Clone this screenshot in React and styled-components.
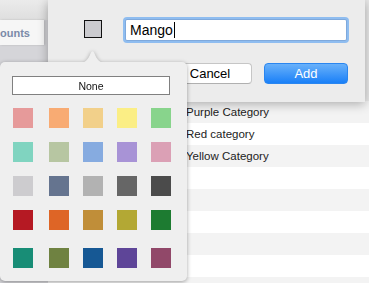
import React from 'react';
import styled, { createGlobalStyle } from 'styled-components';

const GlobalStyle = createGlobalStyle`
  html, body { margin: 0; padding: 0; }
  body {
    font-family: "Liberation Sans", Arial, sans-serif;
    background: #fff;
    -webkit-font-smoothing: antialiased;
  }
`;

const PALETTE = [
  ['#e69a9a', '#f8ab73', '#f2d08a', '#fbee85', '#88d48c'],
  ['#80d4c0', '#b7c6a2', '#86abe0', '#a893d6', '#dba0b5'],
  ['#cdcccf', '#65748f', '#b2b2b2', '#666666', '#4b4b4b'],
  ['#b51923', '#de6526', '#c08e39', '#b3a834', '#1d7b31'],
  ['#188d76', '#6f8241', '#165894', '#5e4598', '#914869'],
];

const CATEGORIES = ['Purple Category', 'Red category', 'Yellow Category', '', '', '', '', '', ''];

const Window = styled.div`
  position: relative;
  width: 369px;
  height: 283px;
  overflow: hidden;
  display: flex;
  background: #fff;
`;

const Sidebar = styled.div`
  width: 48px;
  flex-shrink: 0;
  display: flex;
  flex-direction: column;
  background: #d5d5d9;
`;

const SidebarTop = styled.div`
  height: 20px;
  background: linear-gradient(#ebebeb, #dedede);
`;

const Tab = styled.div`
  height: 25px;
  width: 44px;
  box-sizing: border-box;
  display: flex;
  align-items: center;
  background: #f6f6f6;
  box-shadow: 1px 0 2px rgba(0, 0, 0, 0.15);
  font-size: 11px;
  font-weight: bold;
  color: #7b8aa8;
  white-space: nowrap;
`;

const Content = styled.div`
  flex: 1;
  display: flex;
  flex-direction: column;
`;

const Header = styled.div`
  height: 101px;
  flex-shrink: 0;
  background: #e8e8e8;
  border-left: 1px solid #c4c4c4;
`;

const Row = styled.div`
  height: 22px;
  flex-shrink: 0;
  display: grid;
  grid-template-columns: 138px 1fr;
  align-items: center;
  background: ${p => (p.$odd ? '#fff' : '#f3f3f3')};
  font-size: 11.5px;
  color: #222;
`;

const Sheet = styled.div`
  position: absolute;
  left: 48px;
  top: 0;
  width: 317px;
  height: 102px;
  box-sizing: border-box;
  padding: 19px 17px 0 36px;
  display: flex;
  flex-direction: column;
  background: #ececec;
  box-shadow: 0 2px 10px rgba(0, 0, 0, 0.3);
`;

const FieldRow = styled.div`
  display: flex;
  align-items: center;
  gap: 23px;
  height: 22px;
`;

const ColorWell = styled.div`
  width: 18px;
  height: 18px;
  box-sizing: border-box;
  border: 1px solid #111;
  background: #cbcbcf;
  margin-top: -2px;
`;

const TextField = styled.div`
  width: 222px;
  height: 22px;
  box-sizing: border-box;
  padding-left: 4px;
  display: flex;
  align-items: center;
  background: #fff;
  border: 1px solid #7fa9dc;
  box-shadow: 0 0 0 2px #8fbdf0;
  border-radius: 2px;
  font-size: 14px;
  color: #000;
`;

const Caret = styled.span`
  display: inline-block;
  width: 1px;
  height: 16px;
  margin-left: 1px;
  background: #000;
`;

const ButtonRow = styled.div`
  display: flex;
  justify-content: flex-end;
  gap: 12px;
  margin-top: 22px;
`;

const Button = styled.div`
  width: 84px;
  height: 21px;
  box-sizing: border-box;
  display: flex;
  align-items: center;
  justify-content: center;
  border-radius: 4px;
  font-size: 13px;
  ${p =>
    p.$primary
      ? `
    color: #fff;
    background: linear-gradient(#69b1fa, #1a80f8);
    border: 1px solid #2a86f0;
  `
      : `
    color: #000;
    background: #fff;
    border: 1px solid #c6c6c6;
    border-bottom-color: #b0b0b0;
  `}
`;

const Popover = styled.div`
  position: absolute;
  left: 0;
  top: 62px;
  width: 187px;
  height: 219px;
  box-sizing: border-box;
  padding: 14px 0 0 12px;
  background: #efefef;
  border-radius: 5px;
  filter: drop-shadow(0 1px 2px rgba(0, 0, 0, 0.35));
`;

const Arrow = styled.svg`
  position: absolute;
  left: 79px;
  top: -12px;
  display: block;
`;

const NoneButton = styled.div`
  width: 158px;
  height: 19px;
  box-sizing: border-box;
  display: flex;
  align-items: center;
  justify-content: center;
  background: #fff;
  border: 1px solid #808080;
  font-size: 10.5px;
  color: #111;
`;

const SwatchGrid = styled.div`
  display: grid;
  grid-template-columns: 20px 22px 20px 20px 20px;
  grid-template-rows: 20px 20px 20px 20px 24px;
  column-gap: 14px;
  row-gap: 14px;
  justify-items: end;
  align-items: end;
  margin: 13px 0 0 1px;
`;

const Swatch = styled.div`
  width: 20px;
  height: 20px;
  background: ${p => p.$color};
`;

export default function App() {
  return (
    <>
      <GlobalStyle />
      <Window>
        <Sidebar>
          <SidebarTop />
          <Tab>ounts</Tab>
        </Sidebar>
        <Content>
          <Header />
          {CATEGORIES.map((name, i) => (
            <Row key={i} $odd={i % 2 === 1}>
              <span />
              <span>{name}</span>
            </Row>
          ))}
        </Content>

        <Sheet>
          <FieldRow>
            <ColorWell />
            <TextField>
              Mango
              <Caret />
            </TextField>
          </FieldRow>
          <ButtonRow>
            <Button>Cancel</Button>
            <Button $primary>Add</Button>
          </ButtonRow>
        </Sheet>

        <Popover>
          <Arrow width="27" height="13" viewBox="0 0 27 13">
            <path d="M0 13 C6 13 9 10 11.5 3.5 Q13.5 -1 15.5 3.5 C18 10 21 13 27 13 Z" fill="#efefef" />
          </Arrow>
          <NoneButton>None</NoneButton>
          <SwatchGrid>
            {PALETTE.flat().map((c, i) => (
              <Swatch key={i} $color={c} />
            ))}
          </SwatchGrid>
        </Popover>
      </Window>
    </>
  );
}
